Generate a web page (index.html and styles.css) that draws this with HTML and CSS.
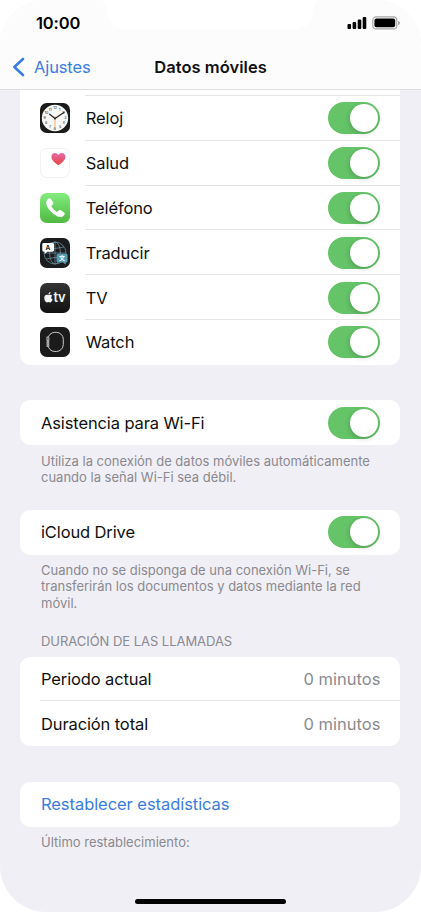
FILE: index.html
```html
<!DOCTYPE html>
<html lang="es">
<head>
<meta charset="utf-8">
<title>Datos móviles</title>
<link rel="stylesheet" href="styles.css">
</head>
<body>
<div class="phone">
  <header class="header">
    <div class="notch"><svg width="222" height="29" viewBox="0 0 222 29"><path d="M0 0Q8 1 8 10Q9 29 27 29H195Q213 29 214 10Q214 1 222 0Z" fill="#fff"/></svg></div>
    <div class="status">
      <span class="time">10:00</span>
      <svg class="indicators" width="54" height="16" viewBox="0 0 54 16">
        <rect x="0.5" y="9" width="3.6" height="5" rx="1"/><rect x="5.6" y="7" width="3.6" height="7" rx="1"/><rect x="10.7" y="4.5" width="3.6" height="9.5" rx="1"/><rect x="15.7" y="2" width="3.6" height="12" rx="1"/>
        <rect x="25.8" y="1.9" width="24" height="12" rx="3.5" fill="none" stroke="#a6a6a6" stroke-width="1.1"/><rect x="27.4" y="3.5" width="20.8" height="8.8" rx="2"/><path d="M51 6Q53 6.4 53 8T51 10Z" fill="#a6a6a6"/>
      </svg>
    </div>
    <nav class="nav">
      <a class="back"><svg width="13" height="20" viewBox="0 0 13 20"><path d="M11 2L2.3 10L11 18" fill="none" stroke="#3a7de0" stroke-width="2.6" stroke-linecap="round" stroke-linejoin="round"/></svg><span class="back-label">Ajustes</span></a>
      <h1 class="title">Datos móviles</h1>
    </nav>
  </header>
  <main>
    <section class="card apps">
      <div class="partial"></div>
      <div class="row">
        <svg class="icon" viewBox="0 0 30 30"><rect width="30" height="30" rx="6.8" fill="#1b1b1b"/><circle cx="15" cy="15" r="13.2" fill="#f7f7f5"/>
          <g class="numerals"><text x="15" y="6.4">12</text><text x="19.8" y="7.7">1</text><text x="23.4" y="11.3">2</text><text x="25.3" y="16.4">3</text><text x="23.6" y="21.2">4</text><text x="20" y="25">5</text><text x="15" y="26.6">6</text><text x="10" y="25">7</text><text x="6.2" y="21.2">8</text><text x="4.7" y="16.4">9</text><text x="6.5" y="11.3">10</text><text x="10.2" y="7.7">11</text></g>
          <path d="M15 15.5L9.7 11.2M15 15.5L24.2 9.2" stroke="#222" stroke-width="1.2" stroke-linecap="round"/><path d="M15 13V26" stroke="#e99a3c" stroke-width=".7"/><circle cx="15" cy="15.4" r="1" fill="#222"/></svg>
        <span class="label">Reloj</span><span class="switch"></span>
      </div>
      <div class="row">
        <svg class="icon" viewBox="0 0 30 30"><defs><linearGradient id="heart" x2="0" y2="1"><stop stop-color="#e76aac"/><stop offset="1" stop-color="#e8453c"/></linearGradient></defs><rect x=".4" y=".4" width="29.2" height="29.2" rx="6.6" fill="#fff" stroke="#ececec" stroke-width=".8"/><path d="M18.4 17.3C14.5 14.7 11.4 12 11.4 8.8C11.4 6.5 13 5 15 5C16.5 5 17.7 5.8 18.4 7C19.1 5.8 20.3 5 21.8 5C23.9 5 25.4 6.5 25.4 8.8C25.4 12 22.3 14.7 18.4 17.3Z" fill="url(#heart)"/></svg>
        <span class="label">Salud</span><span class="switch"></span>
      </div>
      <div class="row">
        <svg class="icon" viewBox="0 0 30 30"><defs><linearGradient id="call" x2="0" y2="1"><stop stop-color="#83ec7e"/><stop offset="1" stop-color="#4fb942"/></linearGradient></defs><rect width="30" height="30" rx="6.8" fill="url(#call)"/><path d="M8.7 5.6C9.7 5 10.3 5.3 11 6.3L13 9.3C13.6 10.3 13.4 10.9 12.7 11.6L11.8 12.5C11.3 13 11.4 13.5 11.8 14.1C13 15.9 14.4 17.3 16.2 18.5C16.8 18.9 17.3 18.9 17.8 18.4L18.7 17.5C19.4 16.8 20 16.7 20.9 17.3L24 19.4C24.9 20.1 25.1 20.7 24.4 21.7C22.5 24.4 19.8 24.7 16.3 22.8C12.4 20.6 9.3 17.4 7.3 13.7C5.4 10.2 6 7.3 8.7 5.6Z" fill="#fff"/></svg>
        <span class="label">Teléfono</span><span class="switch"></span>
      </div>
      <div class="row">
        <svg class="icon" viewBox="0 0 30 30"><rect width="30" height="30" rx="6.8" fill="#1b1c1e"/><g fill="none" stroke="#6f8f9d" stroke-width=".75"><circle cx="15" cy="15" r="11"/><ellipse cx="15" cy="15" rx="5.4" ry="11"/><path d="M15 4V26M4 15H26M6 9Q15 12 24 9M6 21Q15 18 24 21"/></g><path d="M3.7 5H12.6Q14 5 14 6.4V12.3Q14 13.7 12.6 13.7H7.3L4.7 16V13.7H3.7Q2.3 13.7 2.3 12.3V6.4Q2.3 5 3.7 5Z" fill="#fff"/><text class="glyph-a" x="8" y="11.8">A</text><path d="M17.9 15.8H26.2Q27.6 15.8 27.6 17.2V23Q27.6 24.4 26.2 24.4H25.7V26.7L23 24.4H17.9Q16.5 24.4 16.5 23V17.2Q16.5 15.8 17.9 15.8Z" fill="#559bb3"/><text class="glyph-wen" x="22" y="22.4">文</text></svg>
        <span class="label">Traducir</span><span class="switch"></span>
      </div>
      <div class="row">
        <svg class="icon" viewBox="0 0 30 30"><defs><linearGradient id="tv" x2="0" y2="1"><stop stop-color="#343434"/><stop offset="1" stop-color="#111"/></linearGradient></defs><rect width="30" height="30" rx="6.8" fill="url(#tv)"/><path d="M8.8 12.2C9.8 11.5 11.3 11.5 12.2 12.7C10.7 13.7 10.9 15.8 12.6 16.6C12 18.2 11.1 19.5 10.1 19.5C9.5 19.5 9.2 19.1 8.5 19.1C7.8 19.1 7.5 19.5 6.9 19.5C5.5 19.5 4.3 17.3 4.3 15C4.3 12.5 6.2 11.2 8.8 12.2ZM8.4 11.6C8.3 10.2 9.2 9.3 10.5 9C10.6 10.4 9.6 11.5 8.4 11.6Z" fill="#f4f4f4"/><text class="glyph-tv" x="19.5" y="19.4">tv</text></svg>
        <span class="label">TV</span><span class="switch"></span>
      </div>
      <div class="row">
        <svg class="icon" viewBox="0 0 30 30"><rect width="30" height="30" rx="6.8" fill="#1b1b1b"/><rect x="7.9" y="5.3" width="15.4" height="19.2" rx="7" fill="none" stroke="#c9c9c9" stroke-width="1"/><path d="M6.5 9.5H9.3V20H6.5Z" fill="#a5a5a5"/><circle cx="7.9" cy="11.8" r="1.1" fill="#444" stroke="#ccc" stroke-width=".5"/></svg>
        <span class="label">Watch</span><span class="switch"></span>
      </div>
    </section>

    <section class="card wifi"><div class="row"><span class="label">Asistencia para Wi-Fi</span><span class="switch"></span></div></section>
    <p class="note">Utiliza la conexión de datos móviles automáticamente<br>cuando la señal Wi-Fi sea débil.</p>

    <section class="card cloud"><div class="row"><span class="label">iCloud Drive</span><span class="switch"></span></div></section>
    <p class="note">Cuando no se disponga de una conexión Wi-Fi, se<br>transferirán los documentos y datos mediante la red<br>móvil.</p>

    <h2 class="heading">DURACIÓN DE LAS LLAMADAS</h2>
    <section class="card calls">
      <div class="row"><span class="label">Periodo actual</span><span class="value">0 minutos</span></div>
      <div class="row"><span class="label">Duración total</span><span class="value">0 minutos</span></div>
    </section>

    <section class="card reset"><div class="row"><a class="label link">Restablecer estadísticas</a></div></section>
    <p class="note">Último restablecimiento:</p>
  </main>
  <div class="home"></div>
</div>
</body>
</html>
```
FILE: styles.css
```css
* { box-sizing: border-box; }
body { margin: 0; background: #fff; font-family: Inter, "Noto Sans CJK SC", sans-serif; color: #111; }
.phone { position: relative; display: flex; flex-direction: column; width: 421px; height: 912px; overflow: hidden; border-radius: 46px; background: #f0eff5; }
.header { position: relative; height: 90px; background: #fcfcfc; border-bottom: 1px solid #dddce1; }
.notch { position: absolute; top: 0; left: 99px; height: 29px; }
.notch svg { display: block; }
.status { position: relative; display: flex; justify-content: space-between; height: 46px; padding: 14px 20.5px 0 36px; }
.time { font-size: 16.5px; line-height: 19px; font-weight: 600; letter-spacing: -.15px; color: #000; }
.indicators { display: block; margin-top: 1px; }
.nav { position: relative; display: flex; align-items: center; justify-content: center; height: 43px; padding-bottom: 2px; }
.back { position: absolute; left: 12px; top: 11px; display: flex; align-items: center; gap: 9px; color: #3a7de0; font-size: 16.5px; line-height: 20px; letter-spacing: -.12px; }
.back svg { display: block; }
.title { margin: 0; font-size: 16.5px; line-height: 20px; font-weight: 600; letter-spacing: .04px; color: #111; }
.card { margin: 0 20.6px 0 20.4px; border-radius: 10px; background: #fff; overflow: hidden; }
.apps { border-radius: 0 0 10px 10px; }
.partial { height: 6px; }
.row { position: relative; display: flex; align-items: center; height: 44.8px; padding: 0 20px 0 20.6px; }
.apps .row { padding-left: 20px; }
.apps .row::before, .calls .row + .row::before { content: ""; position: absolute; top: -1px; left: 65px; right: 0; height: 1px; background: #e5e5e8; }
.calls .row + .row::before { left: 20px; }
.icon { display: block; flex: none; width: 30px; height: 30px; margin-right: 15.4px; }
.numerals, .glyph-a, .glyph-wen, .glyph-tv { text-anchor: middle; }
.numerals { font-size: 3.6px; font-weight: 500; fill: #444; }
.glyph-a { font-size: 6.5px; font-weight: 700; fill: #222; }
.glyph-wen { font-size: 6px; font-weight: 700; fill: #fff; }
.glyph-tv { font-size: 13px; font-weight: 600; letter-spacing: -.2px; fill: #f4f4f4; }
.label { font-size: 16.5px; line-height: 20px; letter-spacing: -.12px; white-space: nowrap; }
.link { position: relative; top: -.6px; letter-spacing: -.06px; color: #3a7de0; }
.value { margin-left: auto; font-size: 16.5px; line-height: 20px; letter-spacing: 0; color: #8b8b8f; }
.switch { position: relative; flex: none; width: 52px; height: 32px; margin-left: auto; border-radius: 16px; background: #65c368; }
.switch::after { content: ""; position: absolute; top: 2px; right: 2px; width: 28px; height: 28px; border-radius: 50%; background: #fff; box-shadow: -1px 2px 5px rgba(0, 0, 0, .17); }
.wifi { margin-top: 35.6px; }
.cloud { margin-top: 24.8px; }
.note { margin: 7.5px 0 0 41px; font-size: 13px; line-height: 16.2px; letter-spacing: 0; color: #8a898f; white-space: nowrap; }
.heading { margin: 22.2px 0 0 41px; font-size: 13px; line-height: 17px; font-weight: 400; letter-spacing: -.04px; color: #8a898f; }
.calls { margin-top: 6.6px; }
.reset { margin-top: 35.8px; }
.home { position: absolute; left: 135px; bottom: 8px; width: 151px; height: 5px; border-radius: 3px; background: #000; }
```
